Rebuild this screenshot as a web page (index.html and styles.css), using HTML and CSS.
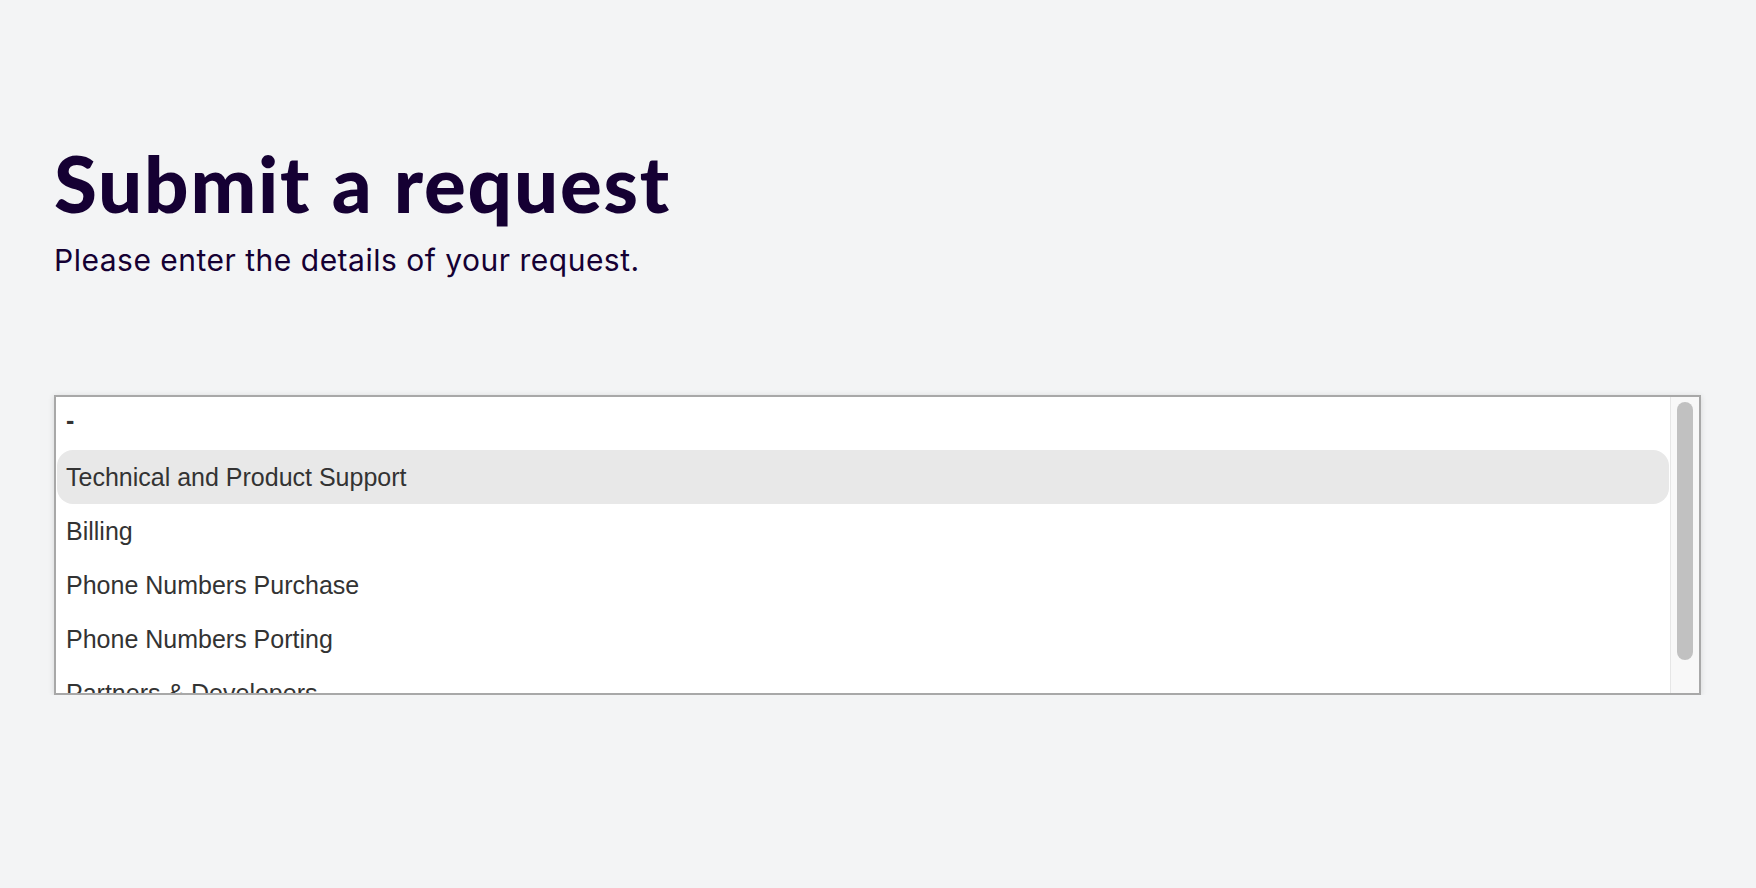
FILE: index.html
```html
<!DOCTYPE html>
<html lang="en">
<head>
<meta charset="utf-8">
<title>Submit a request</title>
<link rel="stylesheet" href="styles.css">
</head>
<body>
<main class="page">
  <header class="page-header">
    <h1 class="title">Submit a request</h1>
    <p class="subtitle">Please enter the details of your request.</p>
  </header>
  <div class="listbox">
    <ul class="options">
      <li class="option">-</li>
      <li class="option is-hover">Technical and Product Support</li>
      <li class="option">Billing</li>
      <li class="option">Phone Numbers Purchase</li>
      <li class="option">Phone Numbers Porting</li>
      <li class="option">Partners &amp; Developers</li>
    </ul>
    <div class="scrollbar"><div class="thumb"></div></div>
  </div>
</main>
</body>
</html>
```
FILE: styles.css
```css
html, body {
  margin: 0;
  padding: 0;
  background: #f3f4f5;
}
.page {
  padding: 135px 55px 0 54px;
}
.page-header {
  display: flex;
  flex-direction: column;
}
.title {
  margin: 0;
  font-family: Lato, "Noto Sans", sans-serif;
  font-weight: 900;
  font-size: 78px;
  line-height: 96px;
  color: #150033;
  letter-spacing: 1.8px;
}
.subtitle {
  margin: 11px 0 0;
  font-family: Inter, "Noto Sans", sans-serif;
  font-size: 30px;
  line-height: 36px;
  color: #150033;
  letter-spacing: 0.5px;
}
.listbox {
  margin-top: 117px;
  height: 296px;
  display: flex;
  border: 2px solid #a8a8a8;
  background: #fff;
  box-shadow: 0 1px 6px rgba(0,0,0,0.12);
  overflow: hidden;
}
.options {
  flex: 1;
  list-style: none;
  margin: 0;
  padding: 0 1px 0 1px;
  overflow: hidden;
}
.option {
  height: 54px;
  line-height: 54px;
  padding: 0 0 0 9px;
  font-family: "Liberation Sans", Arial, sans-serif;
  font-size: 25px;
  color: #333;
  border-radius: 16px;
  white-space: nowrap;
}
.option:first-child {
  height: 53px;
  line-height: 47px;
  font-weight: 700;
}
.option.is-hover {
  background: #e8e8e8;
}
.scrollbar {
  width: 29px;
  border-left: 1px solid #e6e6e6;
  background: #f8f8f8;
  padding: 5px 0 0 6px;
  box-sizing: border-box;
}
.thumb {
  width: 16px;
  height: 258px;
  border-radius: 8px;
  background: #c1c1c1;
}
```
